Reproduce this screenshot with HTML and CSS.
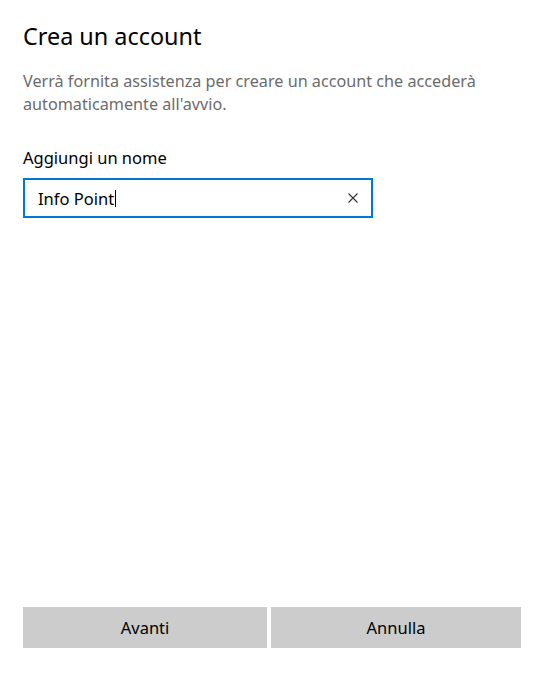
FILE: index.html
```html
<!DOCTYPE html>
<html lang="it">
<head>
    <meta charset="UTF-8">
    <meta name="viewport" content="width=device-width, initial-scale=1.0">
    <title>Crea un account</title>
    <link rel="stylesheet" href="styles.css">
</head>
<body>
    <div class="page">
        <h1 class="title">Crea un account</h1>
        <p class="desc">Verrà fornita assistenza per creare un account che accederà automaticamente all'avvio.</p>

        <label class="label" for="name">Aggiungi un nome</label>
        <div class="field">
            <span class="value">Info Point</span><span class="caret"></span>
            <svg class="clear" viewBox="0 0 10 10">
                <path d="M0.5 0.5 L9.5 9.5 M9.5 0.5 L0.5 9.5"/>
            </svg>
        </div>

        <div class="actions">
            <button class="btn">Avanti</button>
            <button class="btn">Annulla</button>
        </div>
    </div>
</body>
</html>
```

FILE: styles.css
```css
html, body {
    margin: 0;
    height: 100%;
    background: #fff;
    font-family: "Noto Sans", "Open Sans", sans-serif;
    color: #000;
}

.page {
    box-sizing: border-box;
    height: 100%;
    padding: 20px 26px 27px 23px;
    display: flex;
    flex-direction: column;
}

.title {
    margin: 0;
    font-size: 23.4px;
    font-weight: 400;
    line-height: 32px;
}

.desc {
    margin: 18px 0 0;
    width: 490px;
    font-size: 16.2px;
    line-height: 23px;
    color: #6b6b6b;
}

.label {
    margin-top: 31px;
    font-size: 16.5px;
    line-height: 22px;
}

.field {
    box-sizing: border-box;
    margin-top: 9px;
    width: 350px;
    height: 40px;
    border: 2px solid #0078d7;
    display: flex;
    align-items: center;
    padding: 0 13px;
    font-size: 16.5px;
}

.caret {
    width: 1px;
    height: 17px;
    margin-left: 1px;
    background: #000;
}

.clear {
    margin-left: auto;
    width: 10px;
    height: 10px;
    stroke: #333;
    stroke-width: 1.1;
    fill: none;
}

.actions {
    margin-top: auto;
    display: grid;
    grid-template-columns: 244px 1fr;
    gap: 4px;
}

.btn {
    height: 41px;
    border: none;
    background: #ccc;
    font-family: inherit;
    font-size: 16.5px;
    color: #000;
}
```
